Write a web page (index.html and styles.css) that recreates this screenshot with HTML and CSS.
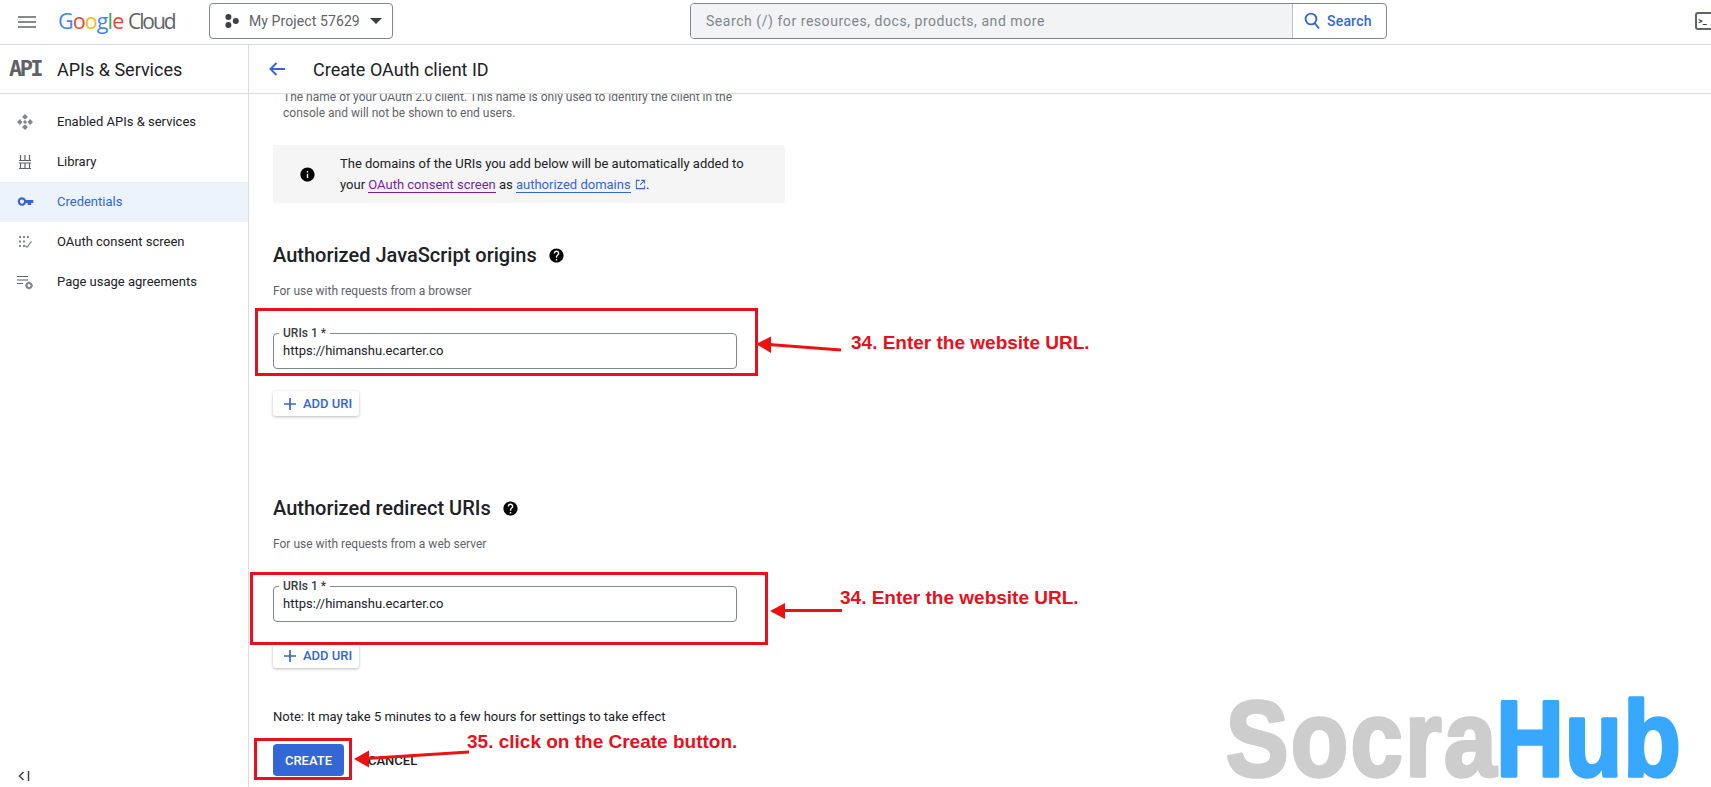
FILE: index.html
```html
<!DOCTYPE html>
<html lang="en">
<head>
<meta charset="utf-8">
<title>Create OAuth client ID</title>
<link rel="stylesheet" href="styles.css">
</head>
<body>
<div class="page">
  <header class="topbar">
    <svg class="hamburger" viewBox="0 0 18 12" width="18" height="12"><path d="M0 1h18M0 6h18M0 11h18" stroke="#5f6368" stroke-width="1.6" fill="none"/></svg>
    <div class="logo"><span class="g-blue">G</span><span class="g-red">o</span><span class="g-yellow">o</span><span class="g-blue">g</span><span class="g-green">l</span><span class="g-red">e</span> <span class="g-cloud">Cloud</span></div>
    <button class="project">
      <svg viewBox="0 0 14 14" width="14" height="14"><circle cx="3.4" cy="3" r="3" fill="#3c4043"/><circle cx="3.4" cy="11" r="3" fill="#3c4043"/><circle cx="10.8" cy="7" r="3" fill="#3c4043"/></svg>
      <span class="project-name">My Project 57629</span>
      <svg viewBox="0 0 12 6" width="12" height="6"><path d="M0 0h12L6 6z" fill="#3c4043"/></svg>
    </button>
    <div class="search">
      <div class="search-field">Search (/) for resources, docs, products, and more</div>
      <div class="search-btn">
        <svg viewBox="0 0 16 18" width="16" height="18"><circle cx="7" cy="7" r="5.4" fill="none" stroke="#3367d6" stroke-width="1.9"/><path d="M10.8 11.2 15 16.5" stroke="#3367d6" stroke-width="1.9" fill="none"/></svg>
        <span>Search</span>
      </div>
    </div>
    <div class="terminal"><span>&gt;_</span></div>
  </header>
  <div class="body">
    <aside class="sidebar">
      <div class="side-head">
        <span class="api-mark">API</span>
        <span class="side-title">APIs &amp; Services</span>
      </div>
      <nav class="nav">
        <a class="nav-item">
          <svg viewBox="0 0 16 16" width="16" height="16" fill="#80868b"><path d="M8 0l3 3-3 2.400L5 3zM8 16l-3-3 3-2.400L11 13zM0 8l3-3 2.400 3L3 11zM16 8l-3 3-2.400-3L13 5z"/><circle cx="8" cy="8" r="1.700"/></svg>
          <span>Enabled APIs &amp; services</span>
        </a>
        <a class="nav-item">
          <svg viewBox="0 0 16 16" width="16" height="16" fill="none" stroke="#5f6368" stroke-width="1.200"><path d="M3.500 1v5M8 1v5M12.500 1v5M3.500 9v5M8 9v5M12.500 9v5M2 6.500h12M2 9h12M2 14.500h12"/></svg>
          <span>Library</span>
        </a>
        <a class="nav-item active">
          <svg class="key" viewBox="0 0 24 24" width="17" height="17" fill="#3367d6"><path d="M12.650 10C11.830 7.670 9.610 6 7 6c-3.310 0-6 2.690-6 6s2.690 6 6 6c2.610 0 4.830-1.670 5.650-4H15v3h5v-3h3v-4H12.650zM7 15c-1.660 0-3-1.340-3-3s1.340-3 3-3 3 1.340 3 3-1.340 3-3 3z"/></svg>
          <span>Credentials</span>
        </a>
        <a class="nav-item">
          <svg viewBox="0 0 16 16" width="16" height="16" fill="#80868b"><rect x="2" y="2" width="2" height="2"/><rect x="6" y="2" width="2" height="2"/><rect x="10" y="2" width="2" height="2"/><rect x="2" y="6.500" width="2" height="2"/><rect x="6" y="6.500" width="2" height="2"/><rect x="2" y="11" width="2" height="2"/><rect x="6" y="11" width="2" height="2"/><path d="M8.500 11.500l1.600 1.800 4.400-6" fill="none" stroke="#80868b" stroke-width="1.200"/></svg>
          <span>OAuth consent screen</span>
        </a>
        <a class="nav-item">
          <svg viewBox="0 0 16 16" width="16" height="16"><path d="M0 2.500h11M0 6h11M0 9.500h6" stroke="#5f6368" stroke-width="1.100" fill="none"/><circle cx="12" cy="11.500" r="2.500" fill="none" stroke="#80868b" stroke-width="2"/><path d="M12 7.700v1.600M12 13.700v1.600M8.300 11.500h1.500M14.200 11.500h1.500" stroke="#80868b" stroke-width="1.400"/></svg>
          <span>Page usage agreements</span>
        </a>
      </nav>
      <div class="collapse">
        <svg viewBox="0 0 12 10" width="12" height="10" fill="none" stroke="#3c4043" stroke-width="1.500"><path d="M5.500 1 1.500 5l4 4M10.500 0v10"/></svg>
      </div>
    </aside>
    <main class="main">
      <div class="main-head">
        <svg viewBox="0 0 16 14" width="16" height="14" fill="none" stroke="#3367d6" stroke-width="2"><path d="M16 7H1.500M7.500 1 1.500 7l6 6"/></svg>
        <h1 class="main-title">Create OAuth client ID</h1>
      </div>
      <div class="scroll">
        <p class="desc">The name of your OAuth 2.0 client. This name is only used to identify the client in the<br>console and will not be shown to end users.</p>
        <div class="notice">
          <svg class="notice-icon" viewBox="0 0 24 24" width="17" height="17"><path d="M12 2C6.480 2 2 6.480 2 12s4.480 10 10 10 10-4.480 10-10S17.520 2 12 2zm1 15h-2v-6h2v6zm0-8h-2V7h2v2z"/></svg>
          <p class="notice-text">The domains of the URIs you add below will be automatically added to<br>your <a class="link visited">OAuth consent screen</a> as <a class="link">authorized domains</a> <svg class="ext" viewBox="0 0 12 12" width="11" height="11" fill="none" stroke="#3367d6" stroke-width="1.100"><path d="M5 1.500H1.500v9h9V7M7 1.500h3.500V5M10.500 1.500 5.500 6.500"/></svg>.</p>
        </div>
        <h2 class="section-title first">Authorized JavaScript origins
          <svg viewBox="0 0 24 24" width="17" height="17"><path d="M12 2C6.480 2 2 6.480 2 12s4.480 10 10 10 10-4.480 10-10S17.520 2 12 2zm1 17h-2v-2h2v2zm2.070-7.750-.9.920C13.450 12.900 13 13.500 13 15h-2v-.5c0-1.100.45-2.100 1.170-2.830l1.240-1.260c.37-.36.59-.86.59-1.410 0-1.100-.9-2-2-2s-2 .9-2 2H8c0-2.210 1.790-4 4-4s4 1.790 4 4c0 .88-.36 1.680-.93 2.250z"/></svg>
        </h2>
        <p class="hint">For use with requests from a browser</p>
        <div class="field field-a">
          <span class="field-label">URIs 1 *</span>
          <span class="field-value">https://himanshu.ecarter.co</span>
        </div>
        <button class="add add-a">
          <svg viewBox="0 0 12 12" width="12" height="12"><path d="M6 0v12M0 6h12" stroke="#3367d6" stroke-width="1.700"/></svg>
          <span>ADD URI</span>
        </button>
        <h2 class="section-title second">Authorized redirect URIs
          <svg viewBox="0 0 24 24" width="17" height="17"><path d="M12 2C6.480 2 2 6.480 2 12s4.480 10 10 10 10-4.480 10-10S17.520 2 12 2zm1 17h-2v-2h2v2zm2.070-7.750-.9.920C13.450 12.900 13 13.500 13 15h-2v-.5c0-1.100.45-2.100 1.170-2.830l1.240-1.260c.37-.36.59-.86.59-1.410 0-1.100-.9-2-2-2s-2 .9-2 2H8c0-2.210 1.790-4 4-4s4 1.790 4 4c0 .88-.36 1.680-.93 2.250z"/></svg>
        </h2>
        <p class="hint">For use with requests from a web server</p>
        <div class="field field-b">
          <span class="field-label">URIs 1 *</span>
          <span class="field-value">https://himanshu.ecarter.co</span>
        </div>
        <button class="add add-b">
          <svg viewBox="0 0 12 12" width="12" height="12"><path d="M6 0v12M0 6h12" stroke="#3367d6" stroke-width="1.700"/></svg>
          <span>ADD URI</span>
        </button>
        <p class="note">Note: It may take 5 minutes to a few hours for settings to take effect</p>
        <div class="actions">
          <button class="create">CREATE</button>
          <button class="cancel">CANCEL</button>
        </div>
      </div>
    </main>
  </div>

  <div class="annot-box box-a"></div>
  <div class="annot-box box-b"></div>
  <div class="annot-box box-c"></div>
  <svg class="overlay" viewBox="0 0 1711 787" width="1711" height="787">
    <path d="M769 344.500 841 350M783 610.500H842M367 758.500 469 752" stroke="#ee1111" stroke-width="3" fill="none"/>
    <path d="M756 344 771 336.500 771 353zM770 611 785 603 785 619zM354 759 369 750.500 369 767.500z" fill="#ee1111"/>
    <g transform="scale(.88 1)">
      <text class="wm wm-gray" x="1393" y="776.500">Socra</text>
      <text class="wm wm-blue" x="1700" y="776.500">Hub</text>
    </g>
  </svg>
  <div class="annot-text text-a">34. Enter the website URL.</div>
  <div class="annot-text text-b">34. Enter the website URL.</div>
  <div class="annot-text text-c">35. click on the Create button.</div>
</div>
</body>
</html>
```

FILE: styles.css
```css
* { box-sizing: border-box; }
html, body { margin: 0; padding: 0; height: 100%; overflow: hidden; background: #fff; }
body { font-family: Roboto, "Liberation Sans", sans-serif; color: #202124; }
p, h1, h2 { margin: 0; }
button { font-family: inherit; border: 0; background: none; padding: 0; }

.page { position: relative; width: 1711px; height: 787px; overflow: hidden; display: flex; flex-direction: column; }

/* top bar */
.topbar { flex: 0 0 45px; display: flex; align-items: flex-start; border-bottom: 1px solid #dadce0; white-space: nowrap; }
.hamburger { margin: 16px 0 0 18px; flex: none; }
.logo { margin: 7px 0 0 22px; width: 151px; flex: none; font-family: "Open Sans", sans-serif; font-size: 21.5px; line-height: 28px; letter-spacing: -.9px; }
.g-blue { color: #4285f4; }
.g-red { color: #ea4335; }
.g-yellow { color: #fbbc04; }
.g-green { color: #34a853; }
.g-cloud { color: #5f6368; font-size: 21px; letter-spacing: -2.100px; }
.project { margin: 3px 0 0 0; flex: none; width: 184px; height: 36px; display: flex; align-items: center; padding-left: 15px; border: 1px solid #80868b; border-radius: 4px; background: #fff; }
.project-name { margin: 0 10px; font-size: 14px; color: #5f6368; letter-spacing: .1px; }
.search { margin: 3px 0 0 297px; flex: none; width: 697px; height: 36px; display: flex; border: 1px solid #80868b; border-radius: 4px; overflow: hidden; }
.search-field { flex: 1; background: #f1f3f4; padding-left: 15px; font-size: 14px; line-height: 34px; color: #80868b; letter-spacing: .55px; }
.search-btn { flex: 0 0 94px; display: flex; align-items: center; gap: 7px; padding-left: 11px; border-left: 1px solid #bdc1c6; color: #3367d6; font-size: 14px; font-weight: 500; letter-spacing: .2px; }
.terminal { margin: 12px 0 0 308px; flex: none; width: 22px; height: 18px; border: 2px solid #5f6368; border-radius: 3px; font-size: 9px; font-weight: 700; line-height: 14px; padding-left: 1px; color: #3c4043; }

/* frame */
.body { flex: 1; display: flex; min-height: 0; }

/* sidebar */
.sidebar { flex: 0 0 249px; display: flex; flex-direction: column; border-right: 1px solid #dadce0; }
.side-head { flex: 0 0 49px; display: flex; align-items: center; border-bottom: 1px solid #dadce0; }
.api-mark { width: 57px; padding-left: 9px; font-family: "DejaVu Sans Mono", monospace; font-weight: 700; font-size: 22px; line-height: 22px; color: #5f6368; letter-spacing: -2.600px; }
.side-title { font-size: 18px; color: #202124; }
.nav { padding-top: 8px; display: flex; flex-direction: column; }
.nav-item { height: 40px; display: flex; align-items: center; padding: 0 0 1px 17px; font-size: 13px; color: #202124; }
.nav-item svg { flex: none; margin-right: 24px; }
.nav-item svg.key { margin-right: 23px; }
.nav-item.active { background: #edf3fd; color: #3367d6; }
.collapse { margin-top: auto; padding: 0 0 6px 18px; line-height: 0; }

/* main */
.main { flex: 1; min-width: 0; display: flex; flex-direction: column; }
.main-head { flex: 0 0 49px; display: flex; align-items: center; padding-left: 20px; border-bottom: 1px solid #dadce0; }
.main-title { margin-left: 28px; font-size: 18px; font-weight: 400; color: #202124; }
.scroll { flex: 1; overflow: hidden; padding-left: 24px; }
.desc { margin: -5px 0 0 10px; font-size: 12px; line-height: 16px; color: #5f6368; }
.notice { margin-top: 24px; width: 512px; height: 58px; display: flex; align-items: center; background: #f5f5f5; border-radius: 3px; }
.notice-icon { flex: none; margin: 0 24px 0 26px; }
.notice-text { font-size: 13px; line-height: 21px; color: #202124; }
.link { color: #3367d6; border-bottom: 1px solid #3367d6; }
.link.visited { color: #7b1fa2; border-bottom-color: #7b1fa2; }
.ext { vertical-align: -1px; margin-left: 1px; }
.section-title { display: flex; align-items: center; gap: 11px; font-size: 20px; font-weight: 500; line-height: 24px; color: #202124; }
.section-title.first { margin-top: 40px; }
.section-title.second { margin-top: 80px; }
.hint { margin-top: 16px; font-size: 12px; line-height: 16px; color: #5f6368; }
.field { position: relative; width: 464px; height: 36px; padding-left: 9px; border: 1px solid #80868b; border-radius: 4px; font-size: 13px; line-height: 34px; color: #202124; }
.field-a { margin-top: 34px; }
.field-b { margin-top: 34px; }
.field-label { position: absolute; left: 5px; top: -8px; padding: 0 4px; background: #fff; font-size: 12px; line-height: 14px; font-weight: 500; color: #3c4043; }
.add { display: flex; align-items: center; gap: 7px; width: 86px; height: 25px; padding-left: 11px; border-radius: 3px; background: #fff; box-shadow: 0 1px 3px rgba(60,64,67,.35); color: #3367d6; font-size: 13px; font-weight: 500; }
.add-a { margin-top: 22px; }
.add-b { margin-top: 21px; }
.note { margin-top: 39px; font-size: 13px; line-height: 20px; color: #202124; }
.actions { margin-top: 17px; display: flex; align-items: center; }
.create { width: 71px; height: 32px; border-radius: 4px; background: #3367d6; color: #fff; font-size: 13px; font-weight: 500; }
.cancel { margin-left: 24px; font-size: 13px; font-weight: 500; color: #202124; }

/* annotations lying over the screenshot */
.annot-box { position: absolute; border: 3px solid #e8101c; }
.box-a { left: 255px; top: 308px; width: 503px; height: 68px; }
.box-b { left: 250px; top: 572px; width: 518px; height: 73px; }
.box-c { left: 254px; top: 738px; width: 98px; height: 42px; }
.overlay { position: absolute; left: 0; top: 0; pointer-events: none; }
.wm { font-family: "Liberation Sans", sans-serif; font-weight: 700; font-size: 107px; stroke-width: 3.500; stroke-linejoin: round; }
.wm-gray { fill: #cdcdcd; stroke: #cdcdcd; letter-spacing: 2.500px; }
.wm-blue { fill: #38a8ff; stroke: #38a8ff; letter-spacing: 1px; }
.annot-text { position: absolute; font-family: "Liberation Sans", Arial, sans-serif; font-weight: 700; font-size: 19px; line-height: 22px; color: #e8101c; white-space: nowrap; }
.text-a { left: 851px; top: 332px; }
.text-b { left: 840px; top: 587px; }
.text-c { left: 467px; top: 731px; }
```
